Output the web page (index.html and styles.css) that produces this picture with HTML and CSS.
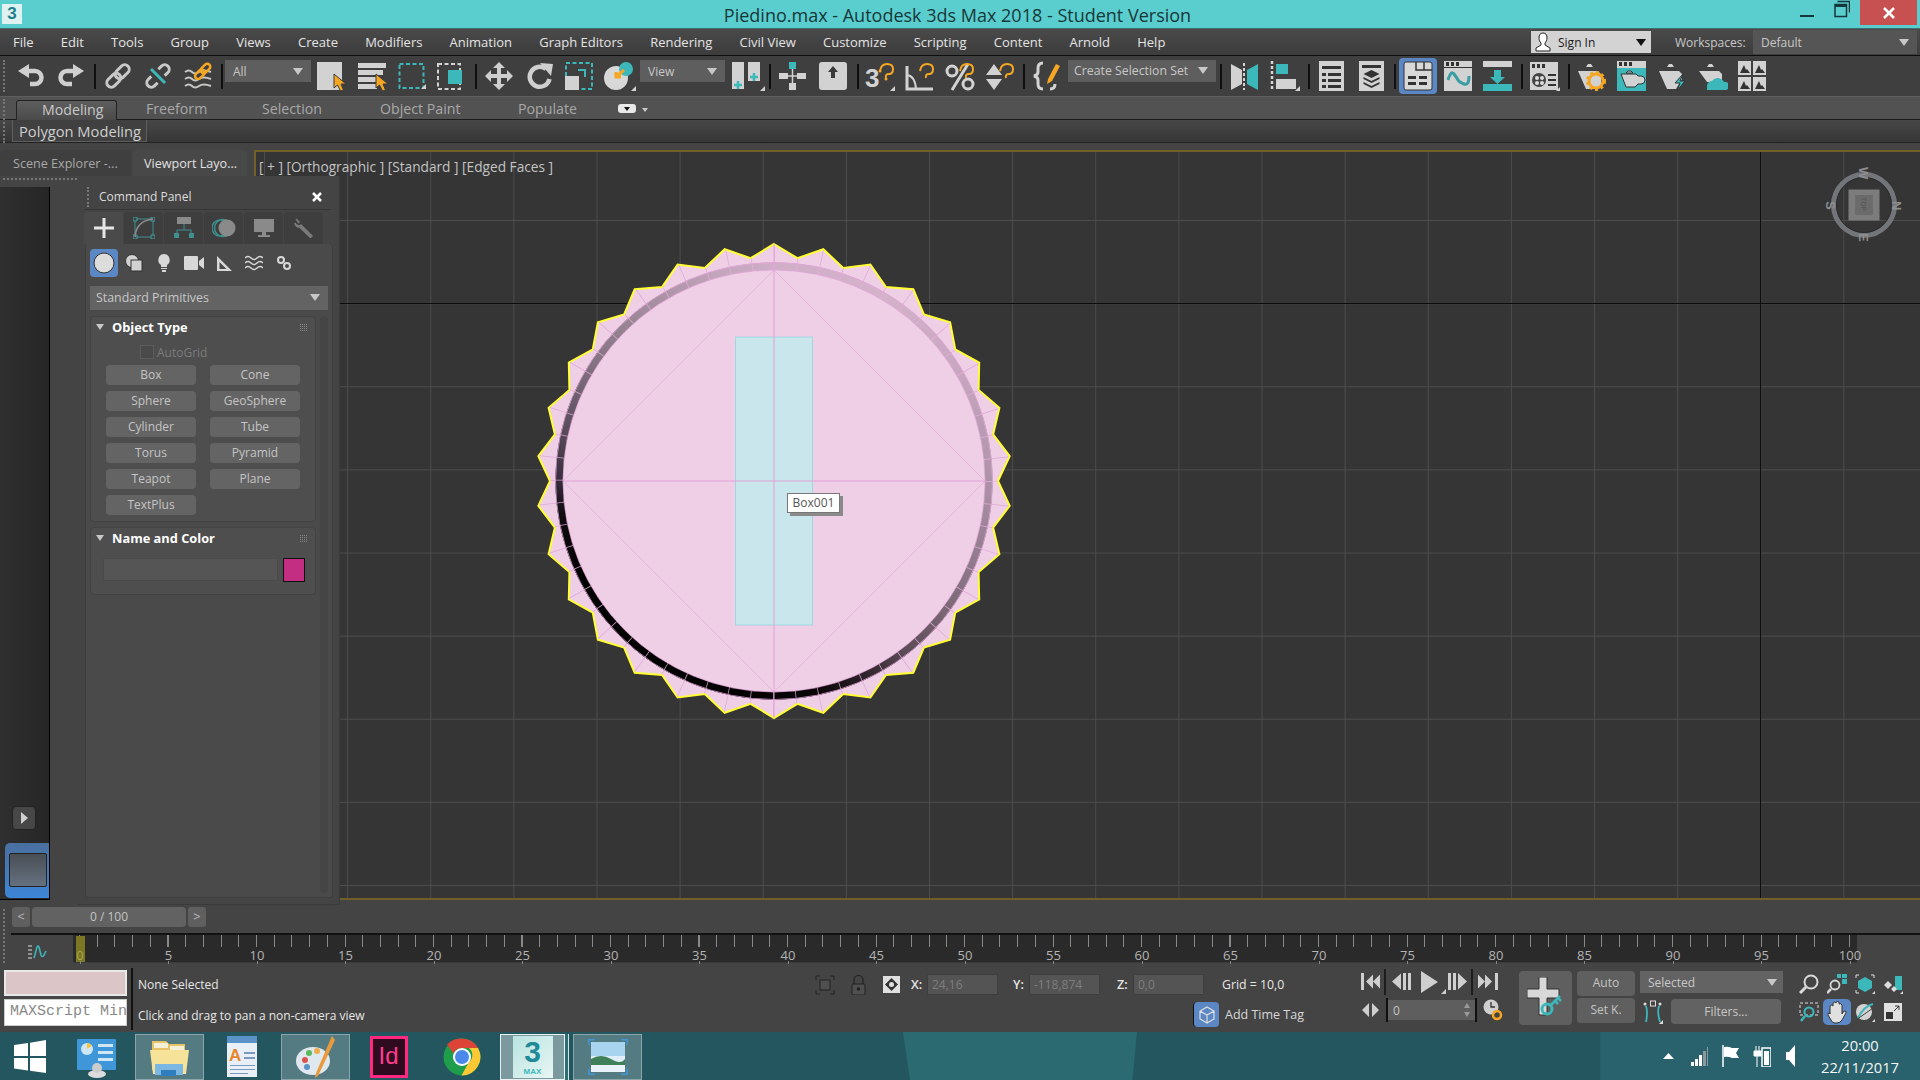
FILE: index.html
```html
<!DOCTYPE html>
<html lang="en">
<head>
<meta charset="utf-8">
<title>Piedino.max - Autodesk 3ds Max 2018 - Student Version</title>
<link rel="stylesheet" href="styles.css">
</head>
<body>
<div class="app">
  <header class="titlebar">
    <div class="appicon"><span>3</span></div>
    <div class="title">Piedino.max - Autodesk 3ds Max 2018 - Student Version</div>
    <div class="winbtns">
      <svg width="14" height="18" viewBox="0 0 14 18"><rect x="0" y="15" width="14" height="2" fill="#17373a"/></svg>
      <svg class="restore" width="16" height="18" viewBox="0 0 16 18"><path d="M3.5 1.5h12v11M1 4.5h11.500v12H1z" fill="none" stroke="#17373a" stroke-width="1.500"/><rect x="1" y="4" width="11" height="3" fill="#17373a"/></svg>
      <div class="close"><svg width="12" height="12" viewBox="0 0 12 12"><path d="M1 1l10 10M11 1L1 11" stroke="#fff" stroke-width="2.500"/></svg></div>
    </div>
  </header>

  <nav class="menubar">
    <span>File</span><span>Edit</span><span>Tools</span><span>Group</span><span>Views</span><span>Create</span><span>Modifiers</span><span>Animation</span><span>Graph Editors</span><span>Rendering</span><span>Civil View</span><span>Customize</span><span>Scripting</span><span>Content</span><span>Arnold</span><span>Help</span>
    <div class="menuright">
      <div class="signin">
        <svg width="18" height="20" viewBox="0 0 18 20"><path d="M9 1c-3 0-4 2-4 5 0 2 1 4 2 5v2l-5 3v3h14v-3l-5-3v-2c1-1 2-3 2-5 0-3-1-5-4-5z" fill="#fff" stroke="#222"/></svg>
        <span>Sign In</span><i class="tri dark"></i>
      </div>
      <span class="wslabel">Workspaces:</span>
      <div class="wsdrop"><span>Default</span><i class="tri"></i></div>
    </div>
  </nav>

  <div class="toolbar">
    <i class="grip"></i>
    <svg class="first" width="28" height="28" viewBox="0 0 28 28"><path d="M10 9h8a6.500 6.500 0 0 1 0 13h-5" fill="none" stroke="#cfcfcf" stroke-width="4.500"/><path d="M12 2 1 9l11 7z" fill="#cfcfcf"/></svg>
    <svg class="g12" width="28" height="28" viewBox="0 0 28 28"><path d="M18 9h-8a6.500 6.500 0 0 0 0 13h5" fill="none" stroke="#cfcfcf" stroke-width="4.500"/><path d="M16 2l11 7-11 7z" fill="#cfcfcf"/></svg>
    <b class="sep g9"></b>
    <svg class="g8" width="28" height="28" viewBox="0 0 28 28"><g fill="none" stroke="#c8c8c8" stroke-width="3" transform="rotate(-45 14 14)"><rect x="0" y="9.500" width="16" height="9" rx="4.500"/><rect x="12" y="9.500" width="16" height="9" rx="4.500"/></g></svg>
    <svg class="g12" width="28" height="28" viewBox="0 0 28 28"><g fill="none" stroke="#c8c8c8" stroke-width="3" transform="rotate(-45 14 14)"><path d="M9 9.500H4.500a4.500 4.500 0 0 0 0 9H9M19 9.500h4.500a4.500 4.500 0 0 1 0 9H19"/></g><path d="M7 7l14 14" stroke="#3cb8bb" stroke-width="3"/></svg>
    <svg class="g12" width="28" height="28" viewBox="0 0 28 28"><g fill="none" stroke="#c8c8c8" stroke-width="2"><path d="M1 10q4-3 7 0t7 0 12 0M1 17q4-3 7 0t7 0 12 0M1 24q4-3 7 0t7 0 12 0"/></g><g fill="none" stroke="#f5a623" stroke-width="2.500" transform="rotate(-45 19 9)"><rect x="9" y="6" width="11" height="6" rx="3"/><rect x="17" y="6" width="11" height="6" rx="3"/></g></svg>
    <b class="sep g9"></b>
    <div class="drop w86 g2"><span>All</span><i class="tri"></i></div>
    <svg class="g6" width="30" height="30" viewBox="0 0 30 30"><rect x="0" y="1" width="25" height="28" fill="#d2d2d2"/><path d="M17 13v14l3.500-3 3 6 3-1-2.500-6h5z" fill="#f5a623" stroke="#3c3c3c"/></svg>
    <svg class="g11" width="30" height="30" viewBox="0 0 30 30"><path d="M0 2h28v5H0zM0 9h25v5H0zM0 16h19v5H0zM0 23h19v5H0z" fill="#d2d2d2"/><path d="M18 13v14l3.500-3 3 6 3-1-2.500-6h5z" fill="#f5a623" stroke="#3c3c3c"/></svg>
    <svg class="g10" width="28" height="28" viewBox="0 0 28 28"><rect x="1.500" y="2" width="24" height="24" fill="none" stroke="#3cb8bb" stroke-width="2" stroke-dasharray="4 2.500"/><path d="M28 27h-5l5-5z" fill="#d2d2d2"/></svg>
    <svg class="g11" width="26" height="28" viewBox="0 0 26 28"><rect x="1" y="2" width="22" height="25" fill="none" stroke="#d2d2d2" stroke-width="2" stroke-dasharray="4 2.500"/><rect x="11" y="8" width="14" height="14" fill="#3cb8bb"/></svg>
    <b class="sep g12"></b>
    <svg class="g8" width="28" height="28" viewBox="0 0 28 28"><path d="M14 0l6 6h-4v6h6V8l6 6-6 6v-4h-6v6h4l-6 6-6-6h4v-6H6v4l-6-6 6-6v4h6V6H8z" fill="#cfcfcf"/></svg>
    <svg class="g13" width="28" height="28" viewBox="0 0 28 28"><path d="M20 7a10 10 0 1 0 3.500 10" fill="none" stroke="#cfcfcf" stroke-width="4.500"/><path d="M14 1l13 1-2 12z" fill="#cfcfcf"/></svg>
    <svg class="g11" width="28" height="28" viewBox="0 0 28 28"><rect x="1" y="1" width="26" height="26" fill="none" stroke="#3cb8bb" stroke-width="2" stroke-dasharray="4 2.500"/><rect x="0" y="14" width="14" height="14" fill="#d2d2d2"/><path d="M13 8h7v7" fill="none" stroke="#3cb8bb" stroke-width="2"/></svg>
    <svg class="g11" width="32" height="30" viewBox="0 0 32 30"><circle cx="12" cy="17" r="12" fill="#d8d8d8"/><circle cx="22" cy="8" r="7" fill="#3cb8bb"/><path d="M20 9l-8 7m0-5v5h5" fill="none" stroke="#f5a623" stroke-width="3"/><path d="M32 30h-5l5-5z" fill="#d2d2d2"/></svg>
    <div class="drop w85 g4"><span>View</span><i class="tri"></i></div>
    <svg class="g6" width="34" height="30" viewBox="0 0 34 30"><rect x="1" y="1" width="12" height="27" fill="#d2d2d2"/><rect x="17" y="1" width="12" height="19" fill="#d2d2d2"/><path d="M7 20v8M3 24h8M23 12v8M19 16h8" stroke="#3cb8bb" stroke-width="2.500"/><path d="M34 30h-5l5-5z" fill="#d2d2d2"/></svg>
    <b class="sep g4"></b>
    <svg class="g7" width="30" height="30" viewBox="0 0 30 30"><rect x="11" y="1" width="7" height="7" fill="#3cb8bb"/><path d="M1 12h9v6H1zM19 12h9v6h-9zM11 22h7v7h-7z" fill="#d2d2d2"/><path d="M14.500 8v14M10 15h9" stroke="#d2d2d2" stroke-width="1.500"/></svg>
    <svg class="g10" width="30" height="30" viewBox="0 0 30 30"><rect x="1" y="1" width="28" height="28" rx="3" fill="#d2d2d2"/><path d="M10 11l5-6 5 6h-3v6h-4v-6z" fill="#3a3a3a"/></svg>
    <b class="sep g9"></b>
    <svg class="g6" width="30" height="30" viewBox="0 0 30 30"><text class="snaptext" x="0" y="26">3</text><path d="M15 10q1-7 7-7t6 5-4 5-3 4" fill="none" stroke="#f5a623" stroke-width="2"/><circle cx="15" cy="10" r="1.500" fill="#f5a623"/><circle cx="21" cy="18" r="1.500" fill="#f5a623"/><path d="M30 30h-5l5-5z" fill="#d2d2d2"/></svg>
    <svg class="g10" width="30" height="30" viewBox="0 0 30 30"><path d="M2 5v23h26" fill="none" stroke="#d2d2d2" stroke-width="3"/><path d="M2 14q8 1 9 14" fill="none" stroke="#d2d2d2" stroke-width="2"/><path d="M15 10q1-7 7-7t6 5-4 5-3 4" fill="none" stroke="#f5a623" stroke-width="2"/></svg>
    <svg class="g10" width="30" height="30" viewBox="0 0 30 30"><circle cx="7" cy="10" r="5" fill="none" stroke="#d2d2d2" stroke-width="3"/><circle cx="23" cy="23" r="5" fill="none" stroke="#d2d2d2" stroke-width="3"/><path d="M7 29 23 3" stroke="#d2d2d2" stroke-width="3"/><path d="M15 10q1-7 7-7t6 5-4 5-3 4" fill="none" stroke="#f5a623" stroke-width="2"/></svg>
    <svg class="g10" width="30" height="30" viewBox="0 0 30 30"><path d="M1 14l8-11 8 11zM1 18h16l-8 11z" fill="#d2d2d2"/><path d="M15 10q1-7 7-7t6 5-4 5-3 4" fill="none" stroke="#f5a623" stroke-width="2"/></svg>
    <b class="sep g8"></b>
    <svg class="g8" width="28" height="30" viewBox="0 0 28 30"><path d="M10 2Q5 2 5 7v4q0 3-4 4 4 1 4 4v4q0 5 5 5M17 28q5 0 5-5" fill="none" stroke="#d2d2d2" stroke-width="3"/><path d="M15 18l8-15 4 2-8 15-5 3z" fill="#f5a623"/></svg>
    <div class="drop w148 g7 selset"><span>Create Selection Set</span><i class="tri"></i></div>
    <b class="sep g4"></b>
    <svg class="g8" width="30" height="30" viewBox="0 0 30 30"><path d="M1 3l11 6v14L1 29z" fill="#d2d2d2"/><path d="M14 2v27" stroke="#d2d2d2" stroke-width="2" stroke-dasharray="3 2"/><path d="M28 3L17 9v14l11 6z" fill="#3cb8bb"/></svg>
    <svg class="g10" width="30" height="30" viewBox="0 0 30 30"><path d="M2 0v30" stroke="#d2d2d2" stroke-width="2.500" stroke-dasharray="3 2"/><rect x="6" y="3" width="12" height="10" fill="#3cb8bb"/><rect x="6" y="18" width="20" height="10" fill="#d2d2d2"/><path d="M30 30h-5l5-5z" fill="#d2d2d2"/></svg>
    <b class="sep g8"></b>
    <svg class="g9" width="25" height="30" viewBox="0 0 25 30"><rect width="25" height="30" y="0" fill="#d2d2d2"/><path d="M3 5h19v3H3z" fill="#333"/><path d="M3 12h4v3H3zM9 12h13v3H9zM3 18h4v3H3zM9 18h13v3H9zM3 24h4v3H3zM9 24h13v3H9z" fill="#333"/></svg>
    <svg class="g15" width="25" height="30" viewBox="0 0 25 30"><rect width="25" height="30" fill="#d2d2d2"/><path d="M3 4h19v3H3z" fill="#333"/><path d="M12.500 9l8 4-8 4-8-4zM4.500 16l8 4 8-4v2l-8 4-8-4zM4.500 21l8 4 8-4v2l-8 4-8-4z" fill="#333"/></svg>
    <b class="sep g10"></b>
    <div class="activeicon g3"><svg width="30" height="30" viewBox="0 0 30 30"><rect x="1" y="1" width="28" height="28" rx="2" fill="#d8d8d8" stroke="#333"/><path d="M13 1v8h16M21 1v8" fill="none" stroke="#333" stroke-width="1.500"/><path d="M5 15h8v3H5zM16 15h8v3h-8zM5 21h8v3H5zM16 21h8v3h-8z" fill="#333"/></svg></div>
    <svg class="g7" width="28" height="30" viewBox="0 0 28 30"><rect width="28" height="30" y="0" fill="#d2d2d2"/><rect y="6" width="28" height="1" fill="#333"/><path d="M2 1h3v4H2zM7 1h3v4H7zM12 1h3v4h-3z" fill="#333"/><path d="M4 19q3-10 6-6t4 6 6 4 5-8" fill="none" stroke="#3a9ea2" stroke-width="3"/></svg>
    <svg class="g11" width="29" height="30" viewBox="0 0 29 30"><rect width="29" height="6" y="0" fill="#d2d2d2"/><path d="M11 9h7v7h4l-7.500 7L7 16h4z" fill="#3cb8bb"/><rect y="23" width="29" height="7" fill="#3cb8bb"/></svg>
    <b class="sep g9"></b>
    <svg class="g7" width="30" height="30" viewBox="0 0 30 30"><rect width="28" height="28" y="1" fill="#d2d2d2"/><path d="M2 3h3v4H2zM7 3h3v4H7zM12 3h3v4h-3zM18 13h8v2h-8zM18 18h8v2h-8zM18 23h8v2h-8z" fill="#333"/><circle cx="9" cy="19" r="7" fill="#444"/><circle cx="7" cy="17" r="2" fill="#ddd"/><circle cx="12" cy="17" r="2" fill="#ddd"/><circle cx="7" cy="22" r="2" fill="#ddd"/><circle cx="12" cy="22" r="2" fill="#ddd"/><path d="M30 30h-4l4-4z" fill="#d2d2d2"/></svg>
    <b class="sep g8"></b>
    <svg class="g7" width="30" height="30" viewBox="0 0 30 30"><path d="M1 10h20l3 3v12l-3 3H9zM9 6h7l-2-3h-3z" fill="#d2d2d2"/><circle cx="19" cy="20" r="7" fill="none" stroke="#f5a623" stroke-width="3"/><circle cx="19" cy="20" r="9" fill="none" stroke="#f5a623" stroke-width="2" stroke-dasharray="3 3"/></svg>
    <svg class="g10" width="30" height="30" viewBox="0 0 30 30"><rect width="29" height="30" y="0" fill="#d2d2d2"/><path d="M2 1h3v4H2zM7 1h3v4H7zM12 1h3v4h-3z" fill="#333"/><rect y="7" width="29" height="23" fill="#3cb8bb"/><path d="M4 13h15l2 2h3a3 3 0 0 1 0 8h-3l-3 3H9zM9 12l2-2h3l2 2z" fill="#d2d2d2" stroke="#333"/></svg>
    <svg class="g11" width="30" height="30" viewBox="0 0 30 30"><path d="M1 10h20l3 3v5l-6 10H9zM9 6h7l-2-3h-3z" fill="#d2d2d2"/><path d="M25 13l-8 9h5l-3 8 8-10h-5z" fill="#3cb8bb" stroke="#333"/></svg>
    <svg class="g10" width="30" height="30" viewBox="0 0 30 30"><path d="M1 10h20l3 3v8H9zM9 6h7l-2-3h-3z" fill="#d2d2d2"/><path d="M9 29v-4a5 5 0 0 1 5-5 7 7 0 0 1 12 1 4 4 0 0 1 2 8z" fill="#3cb8bb"/></svg>
    <svg class="g10" width="30" height="30" viewBox="0 0 30 30"><path d="M0 0h13v14H0zM15 0h13v14H15zM0 16h13v14H0zM15 16h13v14H15z" fill="#d2d2d2"/><path d="M2 12l4-8 2 5 1-1 3 4zM17 12l4-8 2 5 1-1 3 4zM2 28l4-8 2 5 1-1 3 4zM17 28l4-8 2 5 1-1 3 4z" fill="#333"/></svg>
  </div>

  <div class="ribbontabs">
    <i class="grip tall"></i>
    <span class="rtab active">Modeling</span>
    <span class="rtab rt1">Freeform</span>
    <span class="rtab rt2">Selection</span>
    <span class="rtab rt3">Object Paint</span>
    <span class="rtab rt4">Populate</span>
    <i class="ribbonopt"><i class="tri dark small"></i></i>
    <i class="tri small ribbonarrow"></i>
  </div>
  <div class="ribbonpanel"><span class="polymod">Polygon Modeling</span></div>
  <div class="gapbar"></div>

  <main class="workspace">
    <aside class="leftcol">
      <div class="sidetabs">
        <span class="sidetab">Scene Explorer -...</span>
        <span class="sidetab on">Viewport Layo...</span>
      </div>
      <div class="dotrow"><i></i></div>
      <div class="leftbody">
        <div class="strip">
          <div class="expand"><svg width="8" height="12" viewBox="0 0 8 12"><path d="M1 0l7 6-7 6z" fill="#cfcfcf"/></svg></div>
          <div class="thumb"><i></i></div>
        </div>
      </div>
    </aside>
    <section class="viewport">
      <div class="vplabel">[ + ] [Orthographic ] [Standard ] [Edged Faces ]</div>
      <i class="axis-h"></i><i class="axis-v"></i>
      <div class="object">
        <svg class="layer" width="500" height="500" viewBox="-250 -250 500 500">
          <polygon fill="#eecfe6" stroke="#ffff33" stroke-width="2" stroke-linejoin="miter" points="0,-237 23.400,-222.800 49.300,-231.800 69.200,-213 96.400,-216.500 112,-194 139.300,-191.700 149.900,-166.500 176.100,-158.600 181.200,-131.700 205.200,-118.500 204.600,-91.100 225.400,-73.200 219.100,-46.600 235.700,-24.800 224,0 235.700,24.800 219.100,46.600 225.400,73.200 204.600,91.100 205.200,118.500 181.200,131.700 176.100,158.600 149.900,166.500 139.300,191.700 112,194 96.400,216.500 69.200,213 49.300,231.800 23.400,222.800 0,237 -23.400,222.800 -49.300,231.800 -69.200,213 -96.400,216.500 -112,194 -139.300,191.700 -149.900,166.500 -176.100,158.600 -181.200,131.700 -205.200,118.500 -204.600,91.100 -225.400,73.200 -219.100,46.600 -235.700,24.800 -224,0 -235.700,-24.800 -219.100,-46.600 -225.400,-73.200 -204.600,-91.100 -205.200,-118.500 -181.200,-131.700 -176.100,-158.600 -149.900,-166.500 -139.300,-191.700 -112,-194 -96.400,-216.500 -69.200,-213 -49.300,-231.800 -23.400,-222.800"/>
          <circle r="227" fill="none" stroke="#e0a8d8" stroke-width="18" stroke-dasharray="0.700 46.840" transform="rotate(-90)"/>
          <circle r="221" fill="none" stroke="#e0a8d8" stroke-width="5.500" stroke-dasharray="0.700 45.580" transform="rotate(-84)"/>
        </svg>
        <div class="ring"></div>
        <svg class="layer" width="500" height="500" viewBox="-250 -250 500 500">
          <circle r="215" fill="none" stroke="#e6aedc" stroke-opacity=".85" stroke-width="8" stroke-dasharray="0.800 21.715" transform="rotate(-90)"/>
          <circle r="211" fill="none" stroke="#e6a8da" stroke-opacity=".8" stroke-width="1"/>
          <circle r="218.500" fill="none" stroke="#e6a8da" stroke-opacity=".8" stroke-width="1"/>
          <rect x="-38.500" y="-144" width="77" height="288" fill="#c8e6ec" stroke="#9fd8e2"/>
          <path d="M0-211 211 0 0 211-211 0z" fill="none" stroke="#e2a9d8" stroke-width=".7"/>
          <path d="M0-237V237M-211 0H211" stroke="#e2a0d8" stroke-width="1"/>
        </svg>
        <div class="objlabel">Box001</div>
      </div>
      <svg class="viewcube" width="80" height="80" viewBox="0 0 80 80">
        <circle cx="40" cy="40" r="30.500" fill="none" stroke="#72767a" stroke-width="5"/>
        <circle cx="40" cy="40" r="27.500" fill="none" stroke="#2c2c2c" stroke-width="1"/>
        <rect x="24.500" y="24.500" width="31" height="31" fill="#7c7c7c"/>
        <rect x="31" y="30" width="18" height="20" fill="#6b6b6b"/>
        <text class="vc small" transform="translate(37 32) rotate(90)">TOP</text>
        <text class="vc" transform="translate(35 2) rotate(90)">W</text>
        <text class="vc" transform="translate(35 68) rotate(90)">E</text>
        <text class="vc" transform="translate(2 36) rotate(90)">S</text>
        <text class="vc" transform="translate(68 36) rotate(90)">N</text>
      </svg>
    </section>

    <aside class="cmd">
      <div class="cmdhead">
        <i class="grip head"></i>
        <span class="cmdtitle">Command Panel</span>
        <svg width="12" height="12" viewBox="0 0 12 12"><path d="M2 2l8 8M10 2l-8 8" stroke="#fff" stroke-width="2.500"/></svg>
      </div>
      <div class="cmdtabs">
        <div class="ctab on"><svg width="22" height="22" viewBox="0 0 22 22"><path d="M11 1v20M1 11h20" stroke="#e6e6e6" stroke-width="3"/></svg></div>
        <div class="ctab"><svg width="22" height="22" viewBox="0 0 22 22"><rect x="2" y="2" width="18" height="18" fill="none" stroke="#3f8f8f"/><path d="M0 0h4v4H0zM18 0h4v4h-4zM0 18h4v4H0zM18 18h4v4h-4z" fill="#444" stroke="#3f9f9f"/><path d="M2 20Q3 4 20 2" fill="none" stroke="#8a8a8a" stroke-width="1.500"/></svg></div>
        <div class="ctab"><svg width="20" height="22" viewBox="0 0 20 22"><rect x="3" y="0" width="14" height="7" fill="#8a8a8a"/><path d="M10 7v6M3 17v-4h14v4" fill="none" stroke="#3f8f8f"/><path d="M0 16h5v5H0zM15 16h5v5h-5z" fill="#3f8f8f"/></svg></div>
        <div class="ctab"><svg width="24" height="22" viewBox="0 0 24 22"><circle cx="8" cy="11" r="8" fill="none" stroke="#3f8f8f" stroke-width="1.500"/><circle cx="11" cy="11" r="8.500" fill="none" stroke="#3f8f8f" stroke-width="1.500"/><circle cx="15" cy="11" r="8.500" fill="#8a8a8a"/></svg></div>
        <div class="ctab"><svg width="20" height="20" viewBox="0 0 20 20"><rect x="0" y="1" width="20" height="13" fill="#8a8a8a"/><path d="M8 14h4v3h4v2H4v-2h4z" fill="#8a8a8a"/></svg></div>
        <div class="ctab"><svg width="20" height="20" viewBox="0 0 20 20"><path d="M1 5a4 4 0 0 0 6 2l11 11-1.500 1.500L5.500 9A4 4 0 0 1 1 5zM2 1l3 3-1 1" fill="#7a7a7a" stroke="#7a7a7a" stroke-width="1.500"/></svg></div>
      </div>
      <div class="cmdbody">
        <div class="cats">
          <div class="cat on"><svg width="22" height="22" viewBox="0 0 22 22"><circle cx="11" cy="11" r="10" fill="#dcdcdc" stroke="#333"/></svg></div>
          <div class="cat"><svg width="18" height="18" viewBox="0 0 18 18"><circle cx="7" cy="7" r="6.500" fill="#d2d2d2" stroke="#333"/><rect x="6" y="6" width="11" height="11" fill="#d2d2d2" stroke="#333"/></svg></div>
          <div class="cat"><svg width="14" height="18" viewBox="0 0 14 18"><path d="M7 0a6 6 0 0 1 3 11v2H4v-2A6 6 0 0 1 7 0zM4 14h6v1H4zM5 16h4v2H5z" fill="#d8d8d8"/></svg></div>
          <div class="cat"><svg width="20" height="14" viewBox="0 0 20 14"><rect width="14" height="14" rx="1" fill="#d8d8d8"/><path d="M15 5l5-4v12l-5-4z" fill="#d8d8d8"/></svg></div>
          <div class="cat"><svg width="17" height="17" viewBox="0 0 17 17"><path d="M1 1l15 15H1zM3.500 7v7h7z" fill="#d8d8d8" fill-rule="evenodd"/></svg></div>
          <div class="cat"><svg width="18" height="16" viewBox="0 0 18 16"><path d="M0 3q3-3 6 0t6 0 6 0M0 8q3-3 6 0t6 0 6 0M0 13q3-3 6 0t6 0 6 0" fill="none" stroke="#d8d8d8" stroke-width="1.500"/></svg></div>
          <div class="cat"><svg width="16" height="16" viewBox="0 0 16 16"><circle cx="5" cy="5" r="3" fill="none" stroke="#d8d8d8" stroke-width="2"/><circle cx="11" cy="11" r="3" fill="none" stroke="#d8d8d8" stroke-width="2"/></svg></div>
        </div>
        <div class="primdrop"><span>Standard Primitives</span><i class="tri"></i></div>
        <div class="rollouts">
          <div class="rollcol">
            <section class="rollout objtype">
              <div class="rollhead"><i class="tri rollarrow"></i><b>Object Type</b><i class="dots"></i></div>
              <div class="autogrid"><i></i><span>AutoGrid</span></div>
              <div class="btngrid">
                <span>Box</span><span>Cone</span><span>Sphere</span><span>GeoSphere</span><span>Cylinder</span><span>Tube</span><span>Torus</span><span>Pyramid</span><span>Teapot</span><span>Plane</span><span>TextPlus</span>
              </div>
            </section>
            <section class="rollout namecolor">
              <div class="rollhead"><i class="tri rollarrow"></i><b>Name and Color</b><i class="dots"></i></div>
              <div class="namerow"><i class="nameinput"></i><i class="swatch"></i></div>
            </section>
          </div>
          <i class="scrolltrack"></i>
        </div>
      </div>
    </aside>
  </main>

  <div class="slider">
    <i class="grip mid"></i>
    <span class="sbtn">&lt;</span><span class="scenter">0 / 100</span><span class="sbtn">&gt;</span>
  </div>
  <div class="timeline">
    <div class="tlicon"><svg width="20" height="16" viewBox="0 0 20 16"><path d="M0 2h4M0 6h4M0 10h4M0 14h4" stroke="#ddd"/><path d="M6 14 9 3q1-2 2 0l2 8q1 3 3 0l2-4" fill="none" stroke="#3cb8bb" stroke-width="1.500"/></svg></div>
    <div class="track">
      <i class="marker"></i>
      <div class="labels">
        <span class="f0">0</span><span>5</span><span>10</span><span>15</span><span>20</span><span>25</span><span>30</span><span>35</span><span>40</span><span>45</span><span>50</span><span>55</span><span>60</span><span>65</span><span>70</span><span>75</span><span>80</span><span>85</span><span>90</span><span>95</span><span>100</span>
      </div>
    </div>
  </div>

  <div class="status">
    <div class="mini">
      <i class="minipink"></i>
      <div class="minitext">MAXScript Mini</div>
    </div>
    <div class="msgs">
      <span>None Selected</span>
      <span>Click and drag to pan a non-camera view</span>
    </div>
    <div class="coords">
      <div class="coordrow">
        <svg width="20" height="20" viewBox="0 0 20 20"><path d="M1 5V1h4M15 1h4v4M1 15v4h4M15 19h4v-4" fill="none" stroke="#222"/><rect x="5" y="5" width="10" height="10" fill="#4f4f4f" stroke="#222"/></svg>
        <svg class="g16" width="15" height="20" viewBox="0 0 15 20"><path d="M3 9V5a4.500 4.500 0 0 1 9 0v4" fill="none" stroke="#222" stroke-width="1.200"/><rect x="1" y="9" width="13" height="11" rx="1" fill="#4f4f4f" stroke="#222"/><circle cx="7.500" cy="14" r="1.800" fill="#222"/></svg>
        <svg class="g17" width="17" height="17" viewBox="0 0 17 17"><rect width="17" height="17" fill="#e0e0e0"/><path d="M8.500 2l6.500 6.500L8.500 15 2 8.500z" fill="#333"/><circle cx="8.500" cy="8.500" r="2.500" fill="#e0e0e0"/></svg>
        <label class="clabel g11">X:</label><span class="cfield">24,16</span>
        <label class="clabel g15">Y:</label><span class="cfield">-118,874</span>
        <label class="clabel g17">Z:</label><span class="cfield">0,0</span>
        <span class="grid">Grid = 10,0</span>
      </div>
      <div class="tagrow">
        <div class="tagicon"><svg width="18" height="18" viewBox="0 0 18 18"><path d="M9 1l7 4v8l-7 4-7-4V5zM2 5l7 4 7-4M9 9v8" fill="none" stroke="#e0e0e0" stroke-width="1.200"/></svg></div>
        <span>Add Time Tag</span>
      </div>
    </div>
    <div class="playback">
      <svg class="playrow" width="142" height="26" viewBox="0 0 142 26"><path d="M0 4h3v17H0zM5 12.500l7-7v14zM12 12.500l7-7v14z" fill="#cfcfcf"/><path d="M24 0v26M111 0v26" stroke="#111" stroke-width="1.500"/><path d="M31 12.500l9-8v16zM42 4h3v17h-3zM47 4h3v17h-3z" fill="#cfcfcf"/><path d="M60 2l17 11-17 11z" fill="#cfcfcf"/><path d="M80 25h5v-5z" fill="#cfcfcf"/><path d="M87 4h3v17h-3zM92 4h3v17h-3zM97 4l9 8.500-9 8z" fill="#cfcfcf"/><path d="M117 5.500l7 7-7 7zM124 5.500l7 7-7 7zM134 4h3v17h-3z" fill="#cfcfcf"/></svg>
      <div class="framerow">
        <svg width="17" height="14" viewBox="0 0 17 14"><path d="M0 7l7-7v14zM10 0l7 7-7 7z" fill="#cfcfcf"/></svg>
        <b class="sep g7 short"></b>
        <div class="framefield"><span>0</span><svg width="6" height="14" viewBox="0 0 6 14"><path d="M3 0l3 5H0zM0 9h6l-3 5z" fill="#9a9a9a"/></svg></div>
        <b class="sep short"></b>
        <svg class="g6" width="20" height="22" viewBox="0 0 20 22"><circle cx="8" cy="8" r="7.500" fill="#cfcfcf"/><path d="M8 3v5h4" fill="none" stroke="#333" stroke-width="1.300"/><circle cx="14" cy="16" r="4" fill="none" stroke="#f5a623" stroke-width="2.500"/></svg>
      </div>
    </div>
    <div class="keybtn"><svg width="38" height="42" viewBox="0 0 38 42"><path d="M12 0h8v12h12v9H20v17h-8V21H0v-9h12z" fill="#d8d8d8" stroke="#333"/><circle cx="20" cy="32" r="5" fill="none" stroke="#3cb8bb" stroke-width="3"/><path d="M24 28l9-9M28 24l3 3M31 21l3 3" stroke="#3cb8bb" stroke-width="2.500"/></svg></div>
    <div class="autokeys"><span>Auto</span><span>Set K.</span></div>
    <div class="selfilters">
      <div class="seldrop"><span>Selected</span><i class="tri"></i></div>
      <div class="filterrow">
        <svg width="20" height="24" viewBox="0 0 20 24"><rect x="7.500" y="1" width="5" height="5" fill="none" stroke="#ddd"/><circle cx="2" cy="4" r="1.500" fill="#ddd"/><circle cx="17" cy="4" r="1.500" fill="#ddd"/><path d="M3 6q2 6 0 16M16 6q-2 6 1 16" fill="none" stroke="#3cb8bb" stroke-width="1.800"/><path d="M20 24h-4l4-4z" fill="#ddd"/></svg>
        <span class="filters">Filters...</span>
      </div>
    </div>
    <div class="navgrid">
      <div><svg width="20" height="20" viewBox="0 0 20 20"><circle cx="12" cy="8" r="6.500" fill="none" stroke="#d8d8d8" stroke-width="2"/><path d="M7 13l-6 6" stroke="#d8d8d8" stroke-width="3"/></svg></div>
      <div><svg width="20" height="20" viewBox="0 0 20 20"><path d="M10 0h4v4h-4zM15 0h5v4h-5zM15 5h5v5h-5z" fill="#3cb8bb"/><circle cx="8" cy="11" r="4.500" fill="none" stroke="#d8d8d8" stroke-width="1.800"/><path d="M4 15l-4 4" stroke="#d8d8d8" stroke-width="2.500"/></svg></div>
      <div><svg width="20" height="20" viewBox="0 0 20 20"><path d="M10 3l7 4v7l-7 4-7-4V7z" fill="#3cb8bb"/><path d="M1 4V1h3M16 1h3v3M1 16v3h3" fill="none" stroke="#ddd"/><path d="M20 20h-3l3-3z" fill="#ddd"/></svg></div>
      <div><svg width="20" height="20" viewBox="0 0 20 20"><path d="M12 2h7v14h-7z" fill="#3cb8bb"/><path d="M5 7l4 4-4 4-4-4zM11 12l3 3-3 3-3-3z" fill="#ddd"/><path d="M20 20h-3l3-3z" fill="#ddd"/></svg></div>
      <div><svg width="20" height="20" viewBox="0 0 20 20"><rect x="1" y="1" width="18" height="12" fill="none" stroke="#ddd" stroke-dasharray="3 2"/><circle cx="10" cy="10" r="4.500" fill="none" stroke="#3cb8bb" stroke-width="2"/><path d="M6 14l-4 5" stroke="#3cb8bb" stroke-width="2.500"/></svg></div>
      <div class="navon"><svg width="22" height="24" viewBox="0 0 22 24"><path d="M4 14V6q2-2 3 0V3q2-2 3 0v-1q2-1 3 0v2q2-1 3 1v9l2-3q3 0 2 2l-4 7q-2 3-5 3H9q-3 0-4-3l-3-5q-1-2 2-2z" fill="#e0e0e0" stroke="#333"/></svg></div>
      <div><svg width="20" height="20" viewBox="0 0 20 20"><circle cx="9" cy="10" r="8" fill="#d2d2d2"/><path d="M3 16Q9 4 18 2" fill="none" stroke="#3cb8bb" stroke-width="2"/><path d="M1 18L18 6" fill="none" stroke="#444"/><path d="M20 20h-3l3-3z" fill="#ddd"/></svg></div>
      <div><svg width="20" height="20" viewBox="0 0 20 20"><rect x="1" y="1" width="18" height="18" fill="#e0e0e0"/><path d="M3 17h7v-7H3z" fill="#333"/><path d="M11 9l5-5M12 4h4v4" stroke="#333" fill="none"/></svg></div>
    </div>
  </div>

  <footer class="taskbar">
    <div class="startbtn"><svg width="32" height="33" viewBox="0 0 32 33"><path d="M0 5l14-2v13H0zM16 2.700L32 0v16H16zM0 18h14v12.500L0 28.500zM16 18h16v15l-16-2.300z" fill="#fff"/></svg></div>
    <div class="task"><svg width="40" height="42" viewBox="0 0 40 42"><rect x="0" y="3" width="39" height="31" rx="1" fill="#3f97d9"/><circle cx="10" cy="13" r="6" fill="#cfe6f7"/><path d="M10 13V7a6 6 0 0 1 5 3z" fill="#f5c242"/><path d="M21 8h15v3H21zM21 15h15v3H21zM21 22h15v3H21z" fill="#cfe6f7"/><ellipse cx="20" cy="38" rx="9" ry="4" fill="#ddd"/><circle cx="20" cy="32" r="5" fill="#ccc"/></svg></div>
    <div class="task hl"><svg width="40" height="44" viewBox="0 0 40 44"><path d="M2 6h14l3 3h16v26H2z" fill="#e8c467"/><path d="M4 8h14v5H4zM20 11h14v4H20z" fill="#f5f0d8"/><path d="M0 15h39l-3 24H3z" fill="#f7e29a"/><path d="M5 29h28v11H5z" fill="#7bb7e3"/><path d="M11 35h15v6H11z" fill="#2f7fbf"/></svg></div>
    <div class="task"><svg width="34" height="44" viewBox="0 0 34 44"><rect x="1" y="2" width="30" height="40" fill="#e9eff6"/><rect x="1" y="1" width="30" height="7" fill="#5a93c8"/><text class="notesA" x="3" y="26">A</text><path d="M18 17h11v2H18zM18 22h11v2H18zM4 30h25v1H4zM4 34h25v1H4zM4 38h18v1H4z" fill="#7a9bbd"/></svg></div>
    <div class="task hl"><svg width="40" height="46" viewBox="0 0 40 46"><ellipse cx="17" cy="27" rx="17" ry="14" fill="#dfe8ee"/><circle cx="9" cy="26" r="3" fill="#d9534f"/><circle cx="13" cy="19" r="3" fill="#5cb85c"/><circle cx="21" cy="17" r="3" fill="#f0ad4e"/><circle cx="11" cy="33" r="3" fill="#5a93c8"/><path d="M36 2l3 4-17 36-3 2 1-5z" fill="#e89a3c"/></svg></div>
    <div class="task"><div class="idlogo">Id</div></div>
    <div class="task"><svg width="38" height="38" viewBox="0 0 38 38"><circle cx="19" cy="19" r="18.500" fill="#1e9e4a"/><path d="M19 .500a18.500 18.500 0 0 1 16 9.500H19a9 9 0 0 0-8.500 5.500L4 6.500A18.500 18.500 0 0 1 19 .500z" fill="#db4437"/><path d="M35 10a18.500 18.500 0 0 1-16.500 27.500L26 24a9 9 0 0 0 0-14z" fill="#fcc934"/><circle cx="19" cy="19" r="9" fill="#fff"/><circle cx="19" cy="19" r="7" fill="#4a88ea"/></svg></div>
    <div class="task active3d"><div class="tile3d"><span class="three">3</span><span class="max">MAX</span></div></div>
    <div class="task hl"><svg width="40" height="36" viewBox="0 0 40 36"><path d="M0 6V0h7M33 0h7v6M0 30v6h7M33 36h7v-6" fill="none" stroke="#3f97d9" stroke-width="3"/><rect x="3" y="3" width="34" height="30" fill="#dfeef8"/><rect x="3" y="3" width="34" height="14" fill="#a8d4f0"/><path d="M3 20q10-6 20 0t14 0v8H3z" fill="#3f7f5a"/><rect x="3" y="26" width="34" height="7" fill="#e8f2f8"/></svg></div>
    <div class="tray">
      <svg width="11" height="6" viewBox="0 0 11 6"><path d="M5.500 0l5.500 6H0z" fill="#fff"/></svg>
      <svg class="g24" width="17" height="20" viewBox="0 0 17 20"><path d="M0 16h3v4H0zM4 13h3v7H4zM8 9h3v11H8z" fill="#fff"/><path d="M12 5h3v15h-3zM16 1h1v19h-1z" fill="#8a9a9c"/></svg>
      <svg class="g14" width="18" height="22" viewBox="0 0 18 22"><path d="M1 0v22" stroke="#fff" stroke-width="1.500"/><path d="M2 2q4-1 8 1l7 0-3 5 3 5h-7q-4-2-8-1z" fill="#fff"/></svg>
      <svg class="g13" width="18" height="22" viewBox="0 0 18 22"><path d="M3 1v5M6 1v5M1 6h7v5H1zM4 11v11" stroke="#fff" fill="#fff"/><rect x="9" y="3" width="9" height="19" fill="none" stroke="#fff" stroke-width="1.500"/><rect x="11" y="6" width="5" height="14" fill="#fff"/></svg>
      <svg class="g15" width="9" height="22" viewBox="0 0 9 22"><path d="M0 7h3l6-7v22l-6-7H0z" fill="#fff"/></svg>
      <div class="clock"><span>20:00</span><span>22/11/2017</span></div>
    </div>
  </footer>
</div>
</body>
</html>
```

FILE: styles.css
```css
* { box-sizing: border-box; }
html, body { margin: 0; padding: 0; }
body { width: 1920px; height: 1080px; overflow: hidden; background: #444; font-family: "Open Sans", "Noto Sans", sans-serif; font-size: 12px; color: #d0d0d0; }
svg { display: block; flex: none; }
i, b { display: block; font-style: normal; }
.app { width: 1920px; height: 1080px; display: flex; flex-direction: column; position: relative; }

.tri { width: 0; height: 0; border-left: 5px solid transparent; border-right: 5px solid transparent; border-top: 7px solid #c8c8c8; flex: none; }
.tri.dark { border-top-color: #111; }
.tri.small { border-left-width: 3px; border-right-width: 3px; border-top-width: 4px; }
.grip { position: absolute; left: 3px; top: 4px; height: 32px; width: 3px; border-left: 2px dotted #777; }

/* title */
.titlebar { height: 29px; background: #5acece; border-bottom: 1px solid #3f6f70; display: flex; align-items: flex-start; position: relative; flex: none; }
.appicon { position: absolute; left: 2px; top: 4px; width: 20px; height: 20px; background: #dff1f0; display: flex; justify-content: center; }
.appicon span { font: bold 17px/19px "Liberation Sans", sans-serif; color: #1d7f8c; }
.title { width: 100%; text-align: center; font-size: 18px; line-height: 30px; color: #17373a; padding-right: 5px; }
.winbtns { position: absolute; right: 3px; top: 0; height: 25px; display: flex; align-items: flex-start; }
.restore { margin: 0 10px 0 20px; }
.close { width: 57px; height: 25px; background: #c75050; display: flex; align-items: center; justify-content: center; }

/* menu */
.menubar { height: 27px; flex: none; background: linear-gradient(#4a4a4a, #3c3c3c); border-bottom: 1px solid #0e0e0e; display: flex; align-items: center; padding: 0 0 1px 13px; gap: 27.200px; font-size: 13px; color: #e4e4e4; position: relative; }
.menuright { position: absolute; left: 1531px; top: 1px; width: 386px; height: 24px; display: flex; align-items: center; }
.signin { width: 120px; height: 22px; background: #d3d3d3; color: #1a1a1a; display: flex; align-items: center; padding: 0 5px 0 3px; gap: 6px; font-size: 12px; }
.signin .tri { margin-left: auto; }
.wslabel { margin-left: 24px; width: 78px; color: #c8c8c8; font-size: 12px; }
.wsdrop { width: 164px; height: 24px; background: #555; display: flex; align-items: center; justify-content: space-between; padding: 0 8px; color: #c8c8c8; font-size: 12px; }

/* toolbar */
.toolbar { height: 40px; flex: none; background: #3f3f3f; display: flex; align-items: center; position: relative; padding-left: 17px; }
.sep { width: 2px; height: 25px; background: #101010; flex: none; }
.sep.short { height: 24px; }
.drop { height: 22px; background: #5e5e5e; display: flex; align-items: center; justify-content: space-between; padding: 0 8px; color: #c8c8c8; font-size: 12px; align-self: flex-start; margin-top: 4px; flex: none; }
.drop span { white-space: nowrap; }
.w86 { width: 86px; } .w85 { width: 85px; } .w148 { width: 148px; }
.selset { padding: 0 8px 2px 6px; font-size: 12.300px; }
.activeicon { width: 38px; height: 36px; background: #5b88c4; border-radius: 4px; display: flex; align-items: center; justify-content: center; flex: none; }
.snaptext { font: bold 26px "Liberation Sans", sans-serif; fill: #d2d2d2; }
.g2 { margin-left: 2px; } .g3 { margin-left: 3px; } .g4 { margin-left: 4px; } .g6 { margin-left: 6px; } .g7 { margin-left: 7px; } .g8 { margin-left: 8px; } .g9 { margin-left: 9px; } .g10 { margin-left: 10px; } .g11 { margin-left: 11px; } .g12 { margin-left: 12px; } .g13 { margin-left: 13px; } .g14 { margin-left: 14px; } .g15 { margin-left: 15px; } .g16 { margin-left: 16px; } .g17 { margin-left: 17px; } .g24 { margin-left: 17px; }

/* ribbon */
.ribbontabs { height: 24px; flex: none; background: #525252; border-top: 1px solid #5e5e5e; border-bottom: 1px solid #1c1c1c; display: flex; align-items: flex-end; position: relative; font-size: 14.200px; color: #a8a8a8; }
.grip.tall { top: 2px; height: 44px; }
.rtab { position: absolute; top: 2px; line-height: 20px; white-space: nowrap; }
.rtab.active { left: 16px; top: 3px; width: 101px; height: 20px; background: linear-gradient(#5e5e5e, #4a4a4a); border: 1px solid #222; border-bottom: 0; border-radius: 3px 3px 0 0; color: #c8c8c8; padding-left: 25px; line-height: 18px; }
.rt1 { left: 146px; } .rt2 { left: 262px; } .rt3 { left: 380px; } .rt4 { left: 518px; }
.ribbonopt { position: absolute; left: 618px; top: 7px; width: 18px; height: 9px; border-radius: 3px; background: #e8e8e8; display: flex; align-items: center; justify-content: center; }
.ribbonarrow { position: absolute; left: 642px; top: 11px; }
.ribbonpanel { height: 23px; flex: none; background: linear-gradient(#474747, #363636); border-bottom: 1px solid #222; padding-left: 12px; }
.polymod { display: block; width: 135px; height: 22px; background: #404040; border: 1px solid #5e5e5e; border-top: 0; color: #cfcfcf; font-size: 14.700px; line-height: 23px; padding-left: 6px; white-space: nowrap; }
.gapbar { height: 7px; flex: none; background: #444; }

/* workspace */
.workspace { height: 750px; flex: none; display: flex; position: relative; background: #444; }
.leftcol { width: 254px; flex: none; display: flex; flex-direction: column; }
.sidetabs { height: 26px; display: flex; gap: 2px; flex: none; }
.sidetab { width: 131px; height: 26px; background: #3f3f3f; border-radius: 4px 4px 0 0; padding-left: 13px; line-height: 28px; color: #a8a8a8; font-size: 12.600px; white-space: nowrap; overflow: hidden; }
.sidetab.on { width: 114px; background: #484848; color: #e0e0e0; padding-left: 11px; }
.dotrow { height: 11px; padding: 2px 0 0 3px; flex: none; }
.dotrow i { width: 74px; height: 2px; border-top: 2px dotted #777; }
.leftbody { flex: 1; display: flex; }
.strip { width: 50px; background: linear-gradient(90deg, #2f2f2f, #262626); border-right: 1px solid #000; border-bottom: 1px solid #000; position: relative; display: flex; flex-direction: column; }
.expand { width: 24px; height: 24px; margin: 619px 0 0 12px; background: #474747; border: 1px solid #222; border-radius: 4px; display: flex; align-items: center; justify-content: center; }
.thumb { margin: 13px 0 0 5px; width: 44px; height: 55px; background: linear-gradient(#4a6f9e, #3d86d8); border-radius: 5px 0 0 5px; padding: 10px 0 0 4px; }
.thumb i { width: 38px; height: 34px; background: linear-gradient(#4a4f55, #657080); border: 1px solid #222; border-radius: 2px; }

.viewport { flex: 1; position: relative; overflow: hidden; background-color: #353535; background-image: linear-gradient(90deg, #4c4c4c 1px, transparent 1px), linear-gradient(#4c4c4c 1px, transparent 1px); background-size: 83.14px 83.14px; background-position: 8px 68px; border-top: 2px solid #72602a; border-bottom: 2px solid #72602a; border-left: 2px solid #72602a; }
.vplabel { position: absolute; left: 3px; top: 6px; font-size: 13.700px; line-height: 18px; color: #c4c4c4; white-space: pre; }
.axis-h { position: absolute; left: 0; right: 0; top: 151px; height: 1px; background: #0c0c0c; }
.axis-v { position: absolute; left: 1504px; top: 0; bottom: 0; width: 1px; background: #0c0c0c; }
.object { position: absolute; left: 268px; top: 79px; width: 500px; height: 500px; }
.layer { position: absolute; left: 0; top: 0; }
.ring { position: absolute; inset: 0; border-radius: 50%; background: conic-gradient(#d0aec8 0deg, #d3b2ca 31deg, #c9a9c1 57deg, #ad93a9 90deg, #907a8c 112deg, #7a6875 127deg, #5a4a55 143deg, #2a1f27 156deg, #0a0608 168deg, #000 190deg, #000 240deg, #100c10 261deg, #3a3040 271deg, #5a4d5b 284deg, #7e6e7d 300deg, #94818f 314deg, #ad94a8 330deg, #c3a5bc 345deg, #d0aec8 360deg); -webkit-mask: radial-gradient(circle at center, transparent 210.5px, #000 211px, #000 218.5px, transparent 219px); mask: radial-gradient(circle at center, transparent 210.5px, #000 211px, #000 218.5px, transparent 219px); }
.objlabel { position: absolute; left: 263px; top: 262px; width: 53px; height: 20px; background: #fff; border: 1px solid #777; box-shadow: 3px 3px 0 #8a8a8a; color: #555; font-size: 12px; line-height: 18px; text-align: center; }
.viewcube { position: absolute; left: 1568px; top: 13px; }
.vc { font: bold 13px "Liberation Sans", sans-serif; fill: #8e8e8e; }
.vc.small { font-size: 7px; fill: #5a5a5a; }

/* command panel */
.cmd { position: absolute; left: 77px; top: 26px; width: 263px; height: 729px; background: #444; border-right: 1px solid #3a3a3a; border-bottom: 1px solid #3a3a3a; padding: 0 8px; display: flex; flex-direction: column; z-index: 2; }
.cmdhead { height: 34px; display: flex; align-items: center; justify-content: space-between; padding: 8px 8px 0 14px; border-bottom: 1px solid #363636; flex: none; position: relative; }
.grip.head { left: 2px; top: 11px; height: 20px; }
.cmdtitle { color: #dcdcdc; font-size: 12px; }
.cmdtabs { height: 34px; display: flex; gap: 1px; padding-top: 2px; margin-left: -1px; flex: none; }
.ctab { width: 39px; height: 32px; background: #3e3e3e; border-radius: 4px 4px 0 0; display: flex; align-items: center; justify-content: center; }
.ctab.on { background: #4a4a4a; }
.cmdbody { flex: 1; background: #4a4a4a; border-radius: 0 4px 4px 4px; display: flex; flex-direction: column; width: 248px; margin-bottom: 6px; border: 1px solid #3e3e3e; border-top: 0; }
.cats { height: 42px; display: flex; padding: 5px 0 0 4px; flex: none; }
.cat { width: 30px; height: 28px; display: flex; align-items: center; justify-content: center; border-radius: 4px; }
.cat.on { background: #5b88c4; width: 28px; margin-right: 1px; }
.primdrop { height: 24px; margin: 0 4px; background: #636363; display: flex; align-items: center; justify-content: space-between; padding: 0 8px 1px 6px; color: #c8c8c8; font-size: 12.400px; flex: none; }
.rollouts { flex: 1; display: flex; padding: 6px 4px 4px; gap: 4px; }
.rollcol { width: 228px; display: flex; flex-direction: column; gap: 5px; }
.scrolltrack { width: 8px; background: #454545; border-radius: 4px; }
.rollout { background: #4e4e4e; border: 1px solid #434343; border-radius: 4px; }
.objtype { height: 206px; }
.namecolor { height: 68px; }
.rollhead { display: flex; align-items: center; height: 20px; padding-left: 5px; color: #fff; font-size: 12.800px; position: relative; }
.rollarrow { border-left-width: 4px; border-right-width: 4px; border-top-width: 6px; margin-right: 8px; }
.dots { position: absolute; right: 8px; top: 6px; width: 8px; height: 8px; background-image: linear-gradient(90deg, #4e4e4e 1px, transparent 1px), linear-gradient(#4e4e4e 1px, #858585 1px); background-size: 2px 2px; }
.autogrid { display: flex; align-items: center; margin: 8px 0 0 49px; color: #7c7c7c; font-size: 12px; height: 14px; gap: 3px; }
.autogrid i { width: 14px; height: 14px; background: #4a4a4a; border: 1px solid #5c5c5c; }
.btngrid { display: grid; grid-template-columns: 90px 90px; gap: 6px 14px; margin: 6px 0 0 15px; }
.btngrid span { height: 20px; background: #646464; border-radius: 4px; color: #c4c4c4; font-size: 12px; line-height: 19px; text-align: center; }
.namerow { display: flex; gap: 5px; margin: 10px 0 0 12px; }
.nameinput { width: 175px; height: 23px; background: #555; border: 1px solid #4a4a4a; }
.swatch { width: 22px; height: 24px; background: #c42e82; border: 1px solid #111; }

/* slider */
.slider { height: 33px; flex: none; background: #444; display: flex; position: relative; padding: 7px 0 0 12px; gap: 2px; }
.grip.mid { left: 3px; top: 9px; height: 54px; }
.sbtn { width: 18px; height: 20px; background: #5f5f5f; border-radius: 3px; color: #bcbcbc; text-align: center; line-height: 19px; font-size: 13px; }
.scenter { width: 154px; height: 20px; background: #626262; border-radius: 4px; color: #c4c4c4; text-align: center; font-size: 12px; line-height: 20px; }

/* timeline */
.timeline { height: 30px; flex: none; margin-left: 11px; border-top: 2px solid #111; display: flex; background: #444; }
.tlicon { width: 62px; padding: 9px 0 0 17px; flex: none; }
.track { width: 1784px; height: 28px; position: relative; background-color: #2a2a2a; background-image: repeating-linear-gradient(90deg, #888 0 1px, transparent 1px 17.700px); background-size: 100% 12px; background-position: 6px 0; background-repeat: no-repeat; border-bottom: 1px solid #3a3a3a; }
.marker { position: absolute; left: 3px; top: 1px; width: 9px; bottom: 0; background: #7b7724; }
.labels { position: absolute; left: -37.250px; top: 11px; display: flex; }
.labels span { width: 88.500px; flex: none; text-align: center; color: #b4b4b4; font-size: 13px; line-height: 18px; position: relative; }
.labels span::after { content: ""; position: absolute; left: 44px; bottom: 0; width: 1px; height: 3px; background: #888; }
.labels .f0 { color: #a8a64a; }

/* status */
.status { height: 69px; flex: none; background: #444; display: flex; }
.mini { width: 127px; padding: 7px 0 0 4px; flex: none; }
.minipink { height: 26px; width: 123px; background: #dcc5c6; border: 2px solid #e8e8e8; }
.minitext { margin-top: 3px; height: 27px; width: 123px; background: #fff; border: 1px solid #ccc; font: 15px/24px "Liberation Mono", monospace; color: #888; overflow: hidden; white-space: nowrap; padding-left: 5px; }
.msgs { width: 684px; margin-left: 4px; border-left: 2px solid #111; margin-top: 5px; height: 62px; padding-left: 5px; display: flex; flex-direction: column; gap: 12px; color: #e6e6e6; font-size: 12px; line-height: 19px; padding-top: 7px; flex: none; }
.coords { width: 546px; flex: none; padding-top: 11px; }
.coordrow { display: flex; align-items: center; height: 21px; }
.clabel { width: 16px; color: #e6e6e6; font-size: 12.500px; font-weight: 600; }
.cfield { width: 71px; height: 21px; background: #545454; border: 1px solid #3e3e3e; color: #7e7e7e; font-size: 12px; line-height: 20px; padding-left: 4px; }
.grid { margin-left: 18px; color: #e6e6e6; font-size: 12.300px; white-space: nowrap; }
.tagrow { display: flex; align-items: center; margin: 7px 0 0 378px; gap: 6px; color: #d8d8d8; font-size: 12.500px; white-space: nowrap; }
.tagicon { width: 26px; height: 25px; background: #5b88c4; border-radius: 4px; border-left: 1px solid #111; display: flex; align-items: center; justify-content: center; }
.playback { width: 158px; flex: none; padding-top: 6px; }
.framerow { display: flex; align-items: center; margin-top: 3px; padding-left: 1px; }
.framefield { width: 87px; height: 20px; background: #5e5e5e; color: #c4c4c4; display: flex; align-items: center; justify-content: space-between; padding: 0 5px; font-size: 12px; }
.keybtn { width: 53px; height: 54px; margin-top: 8px; background: #5f5f5f; border-radius: 4px; display: flex; align-items: center; justify-content: center; flex: none; }
.autokeys { width: 58px; margin: 8px 0 0 5px; display: flex; flex-direction: column; gap: 2px; flex: none; }
.autokeys span { height: 25px; background: #5f5f5f; border-radius: 4px; text-align: center; line-height: 24px; color: #c4c4c4; font-size: 12px; }
.selfilters { width: 143px; margin: 8px 0 0 5px; flex: none; }
.seldrop { height: 22px; background: #636363; display: flex; align-items: center; justify-content: space-between; padding: 0 6px 0 8px; color: #c8c8c8; font-size: 12px; }
.filterrow { display: flex; align-items: center; margin-top: 6px; padding-left: 3px; gap: 8px; }
.filters { width: 110px; height: 25px; background: #626262; border-radius: 4px; text-align: center; line-height: 25px; color: #c8c8c8; font-size: 12px; }
.navgrid { margin: 8px 0 0 12px; display: grid; grid-template-columns: repeat(4, 28px); grid-auto-rows: 26px; gap: 2px 0; }
.navgrid div { display: flex; align-items: center; justify-content: center; }
.navgrid .navon { background: #5b88c4; border-radius: 5px; }

/* taskbar */
.taskbar { height: 48px; flex: none; background: linear-gradient(90deg, #24565f 0, #24565f 1600px, #29626c 1601px, #29626c 100%); position: relative; display: flex; align-items: center; gap: 4px; padding-top: 1px; }
.taskbar::before { content: ""; position: absolute; left: 903px; top: 0; width: 234px; height: 48px; background: #2c6a72; clip-path: polygon(0 0, 100% 0, 98% 100%, 3% 100%); }
.startbtn { width: 58px; padding-left: 14px; position: relative; }
.task { width: 69px; height: 46px; display: flex; align-items: center; justify-content: center; position: relative; }
.task.hl { background: rgba(255,255,255,.22); border: 1px solid rgba(255,255,255,.32); }
.active3d { background: rgba(255,255,255,.4); border: 1px solid #e8f2f2; width: 65px; margin-right: 4px; box-shadow: 3px 0 0 #2f6d75, 4px 0 0 #cfe6e6; }
.tile3d { width: 40px; height: 42px; background: linear-gradient(135deg, #b8e4e0, #e8f6f4); display: flex; flex-direction: column; align-items: center; }
.three { font: bold 30px/31px "Liberation Sans", sans-serif; color: #1f8a98; }
.max { font: bold 8px/9px "Liberation Sans", sans-serif; color: #3cb8bb; }
.idlogo { width: 38px; height: 42px; background: #2e0b1e; border: 3px solid #ff2a7f; color: #ff3d8f; font: 24px/34px "Liberation Sans", sans-serif; text-align: center; }
.notesA { font: bold 17px "Liberation Sans", sans-serif; fill: #e8862e; }
.tray { position: absolute; left: 1663px; top: 0; height: 48px; width: 257px; display: flex; align-items: center; }
.clock { margin-left: 15px; width: 100px; color: #f2f6f6; font-size: 14.700px; line-height: 22px; display: flex; flex-direction: column; align-items: center; white-space: nowrap; }
```
